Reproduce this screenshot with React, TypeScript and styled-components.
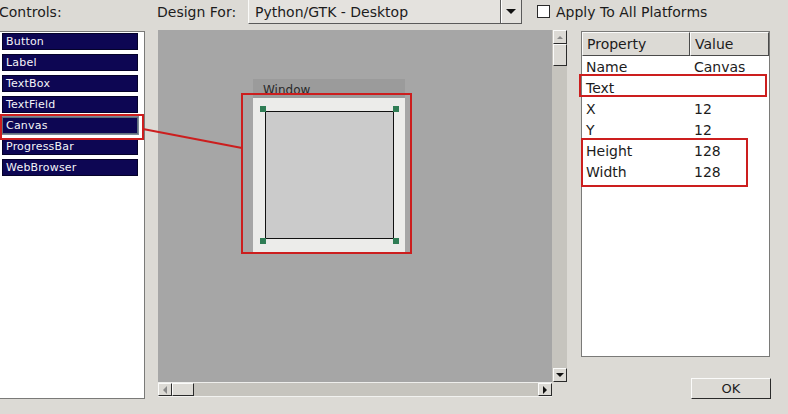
import styled, { createGlobalStyle, css } from 'styled-components';

const GlobalStyle = createGlobalStyle`
  html, body {
    margin: 0;
    padding: 0;
    background: #dcdad5;
    overflow: hidden;
  }
  body {
    font-family: "DejaVu Sans", "Noto Sans", sans-serif;
    color: #1c1c1c;
  }
`;

const Page = styled.div`
  position: relative;
  width: 788px;
  height: 414px;
  overflow: hidden;
  display: flex;
  flex-direction: column;
  background: #dcdad5;
`;

const TopBar = styled.div`
  display: flex;
  align-items: center;
  height: 24px;
  font-size: 14px;
`;

const Caption = styled.span<{ $w?: number; $ml?: number }>`
  width: ${p => (p.$w ? `${p.$w}px` : 'auto')};
  margin-left: ${p => p.$ml ?? 0}px;
  white-space: nowrap;
`;

const Combo = styled.div`
  display: flex;
  align-items: center;
  box-sizing: border-box;
  width: 274px;
  height: 27px;
  margin-top: -3px;
  background: #e4e2de;
  border: 1px solid #5a5a5a;
  border-top-color: #bcbab5;
  border-left-color: #fafaf8;
`;

const ComboText = styled.span`
  flex: 1;
  padding-left: 6px;
  padding-top: 2px;
  font-size: 14px;
`;

const ComboButton = styled.div`
  width: 20px;
  align-self: stretch;
  display: flex;
  align-items: center;
  justify-content: center;
  border-left: 1px solid #5a5a5a;
  box-shadow: inset 1px 0 0 #ffffff;
  padding-top: 2px;
`;

const Arrow = styled.span<{ $dir: 'up' | 'down' | 'left' | 'right'; $size?: number; $muted?: boolean }>`
  width: 0;
  height: 0;
  ${p => {
    const s = p.$size ?? 4;
    const c = p.$muted ? '#8a8a8a' : '#111111';
    switch (p.$dir) {
      case 'up':
        return css`border-left: ${s}px solid transparent; border-right: ${s}px solid transparent; border-bottom: ${s}px solid ${c};`;
      case 'down':
        return css`border-left: ${s}px solid transparent; border-right: ${s}px solid transparent; border-top: ${s}px solid ${c};`;
      case 'left':
        return css`border-top: ${s}px solid transparent; border-bottom: ${s}px solid transparent; border-right: ${s}px solid ${c};`;
      default:
        return css`border-top: ${s}px solid transparent; border-bottom: ${s}px solid transparent; border-left: ${s}px solid ${c};`;
    }
  }}
`;

const CheckBox = styled.span`
  box-sizing: border-box;
  width: 13px;
  height: 13px;
  margin-left: 15px;
  margin-top: -2px;
  background: #ffffff;
  border: 1px solid #2a2a2a;
`;

const Main = styled.div`
  display: flex;
  margin-top: 6px;
`;

const ControlList = styled.div`
  box-sizing: border-box;
  width: 146px;
  height: 368px;
  margin-left: -1px;
  margin-top: 1px;
  padding: 1px 0 0 2px;
  background: #ffffff;
  border: 1px solid #7a7a78;
  display: flex;
  flex-direction: column;
  gap: 4px;
`;

const ControlItem = styled.div<{ $selected?: boolean }>`
  box-sizing: border-box;
  width: 136px;
  height: 17px;
  padding-left: 3px;
  display: flex;
  align-items: center;
  background: #0d0653;
  color: #f4f4f8;
  font-size: 11px;
  letter-spacing: 0.2px;
  border: 1px solid ${p => (p.$selected ? '#5e6e7c' : '#05022a')};
  ${p => p.$selected && 'box-shadow: 0 0 0 1px #7d8a96;'}
`;

const DesignArea = styled.div`
  display: grid;
  grid-template-columns: 394px 15px;
  grid-template-rows: 352px 15px;
  margin-left: 13px;
  width: 409px;
`;

const Board = styled.div`
  position: relative;
  background: #a6a6a6;
  overflow: hidden;
`;

const VScroll = styled.div`
  background: #c6c4be;
  display: flex;
  flex-direction: column;
  justify-content: space-between;
  padding-left: 1px;
`;

const HScroll = styled.div`
  background: #c6c4be;
  display: flex;
  align-items: stretch;
  border-top: 1px solid #eeeeec;
  border-bottom: 1px solid #f2f2f0;
`;

const ScrollButton = styled.div<{ $w?: number; $h?: number }>`
  box-sizing: border-box;
  width: ${p => p.$w ?? 14}px;
  height: ${p => p.$h ?? 14}px;
  display: flex;
  align-items: center;
  justify-content: center;
  background: #dcdad5;
  border: 1px solid #2a2a2a;
  border-top-color: #fbfbfa;
  border-left-color: #fbfbfa;
`;

const VTop = styled.div`
  display: flex;
  flex-direction: column;
`;

const HTrack = styled.div`
  flex: 1;
  display: flex;
`;

const DesignWindow = styled.div`
  position: absolute;
  left: 95px;
  top: 49px;
  width: 152px;
`;

const WindowTitle = styled.div`
  height: 19px;
  box-sizing: border-box;
  padding: 3px 0 0 10px;
  background: #9b9b9b;
  color: #2a2a2a;
  font-size: 12px;
  line-height: 16px;
  overflow: hidden;
`;

const WindowBody = styled.div`
  height: 155px;
  box-sizing: border-box;
  padding: 13px 0 0 12px;
  background: #ececea;
`;

const CanvasWidget = styled.div`
  position: relative;
  box-sizing: border-box;
  width: 129px;
  height: 128px;
  background: #cbcbcb;
  border: 1px solid #111111;
`;

const Handle = styled.span<{ $x: 'l' | 'r'; $y: 't' | 'b' }>`
  position: absolute;
  width: 6px;
  height: 6px;
  background: #2f7d55;
  ${p => (p.$x === 'l' ? 'left: -6px;' : 'right: -6px;')}
  ${p => (p.$y === 't' ? 'top: -6px;' : 'bottom: -6px;')}
`;

const RightColumn = styled.div`
  display: flex;
  flex-direction: column;
  margin-left: 14px;
  width: 190px;
`;

const PropPanel = styled.div`
  box-sizing: border-box;
  width: 189px;
  height: 326px;
  margin-top: 1px;
  background: #ffffff;
  border: 1px solid #7a7a78;
  font-size: 14px;
`;

const PropRow = styled.div<{ $head?: boolean }>`
  display: grid;
  grid-template-columns: 108px 1fr;
  height: ${p => (p.$head ? 24 : 21)}px;
`;

const HeadCell = styled.div`
  box-sizing: border-box;
  display: flex;
  align-items: center;
  padding-left: 4px;
  background: #dcdad5;
  border: 1px solid #4a4a4a;
  border-top-color: #fbfbfa;
  border-left-color: #fbfbfa;
`;

const Cell = styled.div`
  display: flex;
  align-items: center;
  padding-left: 4px;
`;

const OkButton = styled.div`
  box-sizing: border-box;
  align-self: flex-end;
  width: 80px;
  height: 21px;
  margin-top: 21px;
  display: flex;
  align-items: center;
  justify-content: center;
  font-size: 13px;
  background: #dcdad5;
  border: 1px solid #2a2a2a;
  border-top-color: #fbfbfa;
  border-left-color: #fbfbfa;
`;

const Annotations = styled.svg`
  position: absolute;
  left: 0;
  top: 0;
  pointer-events: none;
`;

const controls = ['Button', 'Label', 'TextBox', 'TextField', 'Canvas', 'ProgressBar', 'WebBrowser'];

const properties: [string, string][] = [
  ['Name', 'Canvas'],
  ['Text', ''],
  ['X', '12'],
  ['Y', '12'],
  ['Height', '128'],
  ['Width', '128'],
];

// red callout boxes drawn on top of the dialog
const marks = [
  { x: 1, y: 115, w: 142, h: 24 },
  { x: 242, y: 94, w: 169, h: 159 },
  { x: 580, y: 75, w: 186, h: 21 },
  { x: 582, y: 139, w: 165, h: 47 },
];

export default function App() {
  return (
    <Page>
      <GlobalStyle />
      <TopBar>
        <Caption $w={158} $ml={-1}>Controls:</Caption>
        <Caption $w={91}>Design For:</Caption>
        <Combo>
          <ComboText>Python/GTK - Desktop</ComboText>
          <ComboButton>
            <Arrow $dir="down" $size={5} />
          </ComboButton>
        </Combo>
        <CheckBox />
        <Caption $ml={6}>Apply To All Platforms</Caption>
      </TopBar>

      <Main>
        <ControlList>
          {controls.map(name => (
            <ControlItem key={name} $selected={name === 'Canvas'}>
              {name}
            </ControlItem>
          ))}
        </ControlList>

        <DesignArea>
          <Board>
            <DesignWindow>
              <WindowTitle>Window</WindowTitle>
              <WindowBody>
                <CanvasWidget>
                  <Handle $x="l" $y="t" />
                  <Handle $x="r" $y="t" />
                  <Handle $x="l" $y="b" />
                  <Handle $x="r" $y="b" />
                </CanvasWidget>
              </WindowBody>
            </DesignWindow>
          </Board>
          <VScroll>
            <VTop>
              <ScrollButton>
                <Arrow $dir="up" $size={3} $muted />
              </ScrollButton>
              <ScrollButton $h={22} />
            </VTop>
            <ScrollButton>
              <Arrow $dir="down" $size={4} />
            </ScrollButton>
          </VScroll>
          <HScroll>
            <ScrollButton $h={13}>
              <Arrow $dir="left" $size={4} $muted />
            </ScrollButton>
            <HTrack>
              <ScrollButton $w={22} $h={13} />
            </HTrack>
            <ScrollButton $h={13}>
              <Arrow $dir="right" $size={4} />
            </ScrollButton>
          </HScroll>
        </DesignArea>

        <RightColumn>
          <PropPanel>
            <PropRow $head>
              <HeadCell>Property</HeadCell>
              <HeadCell>Value</HeadCell>
            </PropRow>
            {properties.map(([k, v]) => (
              <PropRow key={k}>
                <Cell>{k}</Cell>
                <Cell>{v}</Cell>
              </PropRow>
            ))}
          </PropPanel>
          <OkButton>OK</OkButton>
        </RightColumn>
      </Main>

      <Annotations width={788} height={414}>
        <g stroke="#cc1e1e" strokeWidth={2} fill="none">
          {marks.map((m, i) => (
            <rect key={i} x={m.x} y={m.y} width={m.w} height={m.h} />
          ))}
          <line x1={143} y1={129} x2={242} y2={148} />
        </g>
      </Annotations>
    </Page>
  );
}
